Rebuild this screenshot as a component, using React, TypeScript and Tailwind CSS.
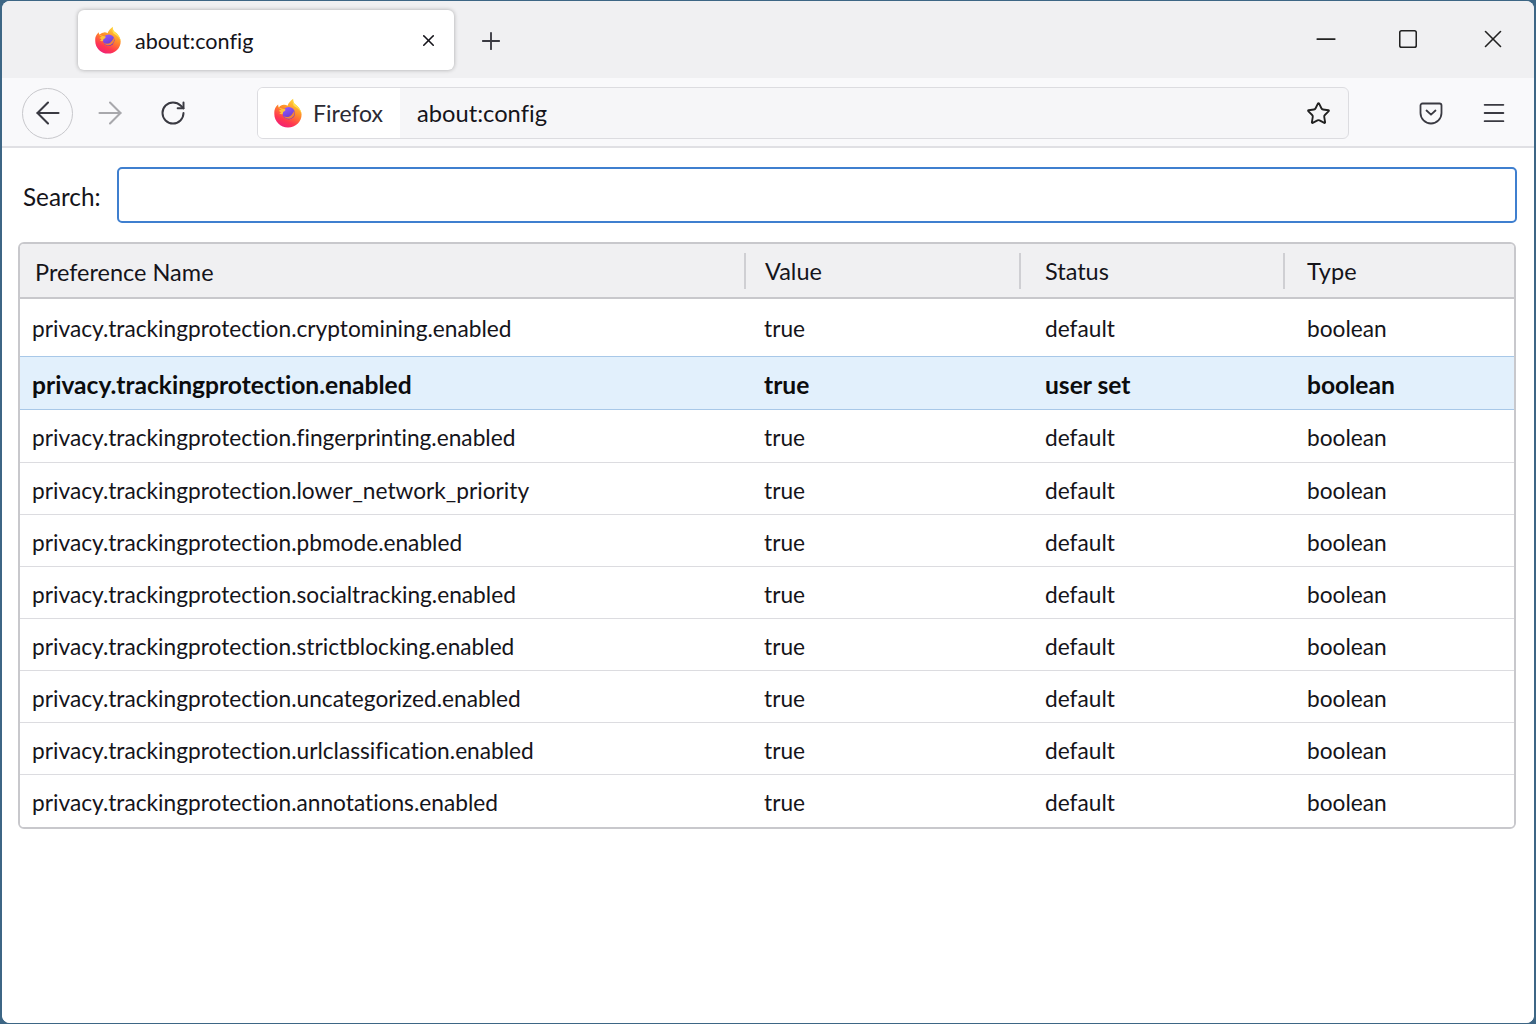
import { ArrowLeft, ArrowRight, RotateCw, Star, Plus, X, Minus, Square, Menu } from "lucide-react";

const rows = [
  { name: "privacy.trackingprotection.cryptomining.enabled", cls: "h-[57px] pt-[4px]" },
  { name: "privacy.trackingprotection.enabled", status: "user set", active: true, cls: "h-[54px] pt-[4px]" },
  { name: "privacy.trackingprotection.fingerprinting.enabled", cls: "h-[53px] pt-[5px]" },
  { name: "privacy.trackingprotection.lower_network_priority", cls: "h-[52px] pt-[6px]" },
  { name: "privacy.trackingprotection.pbmode.enabled", cls: "h-[52px] pt-[6px]" },
  { name: "privacy.trackingprotection.socialtracking.enabled", cls: "h-[52px] pt-[6px]" },
  { name: "privacy.trackingprotection.strictblocking.enabled", cls: "h-[52px] pt-[6px]" },
  { name: "privacy.trackingprotection.uncategorized.enabled", cls: "h-[52px] pt-[6px]" },
  { name: "privacy.trackingprotection.urlclassification.enabled", cls: "h-[52px] pt-[6px]" },
  { name: "privacy.trackingprotection.annotations.enabled", cls: "h-[52px] pt-[5px]" },
];

function FirefoxLogo({ className }: { className?: string }) {
  return (
    <svg viewBox="0 0 32 32" className={className}>
      <defs>
        <linearGradient id="ffOuter" x1="0.75" y1="0.05" x2="0.3" y2="1">
          <stop offset="0" stopColor="#ffd43a" />
          <stop offset="0.4" stopColor="#ff8a2a" />
          <stop offset="0.75" stopColor="#ff3750" />
          <stop offset="1" stopColor="#f0207a" />
        </linearGradient>
        <linearGradient id="ffInner" x1="0.3" y1="0" x2="0.7" y2="1">
          <stop offset="0" stopColor="#9059ff" />
          <stop offset="1" stopColor="#6a35c4" />
        </linearGradient>
      </defs>
      <path
        d="M1.500 13.500C2.200 10.500 4 8 5.500 7c-.1 1.300.2 2.400.8 3.100C7.500 8.300 9.500 7.400 11.500 7.300c1.600-.1 3 .3 4 1C16.300 5.500 18.800 2.800 21.500 0.800c-.2 2 .3 3.800 1.700 5.500 3 2 6.800 5.800 7.300 11 .200 7.800-6.500 14.200-14.500 14.200C8 31.500 1.400 25 1.400 17c0-1.300 0-2.400.1-3.500Z"
        fill="url(#ffOuter)"
      />
      <path d="M21.500 1c-.2 2 .3 3.800 1.700 5.500 3 2 6.800 5.800 7.300 10.800-1.300-4-3.900-6.400-7-7.900C21.200 8.200 20.500 4.800 21.500 1Z" fill="#ffe14a" />
      <circle cx="16.800" cy="16.200" r="6.600" fill="url(#ffInner)" />
      <path d="M22.600 13.500c1.400 4-1 8-5.200 8.600-2.600.3-4.800-.8-6-2.800 2 1.300 5.500 1.300 7.400-.4 1.500-1.300 2.700-3.200 3.800-5.400Z" fill="#ff8a2a" opacity="0.9" />
      <path d="M5.800 9.500c1.700 1 3.800 2 6.200 2.300.900.100 1.500.500 1.200 1.300-.4.900-1.600 1.200-2.200 1.800-.600.700-.300 1.900-.900 2.300-1 .400-2.500-.100-3.600-.900 1 .100 1.800-.200 2-.800-.500-.900-1.500-1.500-2.500-1.700 1-.900 2.200-1.400 3-1.500-1.200-.4-2.400-1.200-3.200-2.300Z" fill="#ffc23a" />
    </svg>
  );
}

function PocketIcon({ className }: { className?: string }) {
  return (
    <svg viewBox="0 0 24 24" fill="none" stroke="currentColor" strokeWidth="1.8" strokeLinecap="round" strokeLinejoin="round" className={className}>
      <path d="M3.500 2.500h17a2 2 0 0 1 2 2v7.500a10.500 10.500 0 0 1-21 0V4.500a2 2 0 0 1 2-2Z" />
      <path d="M7.500 9.500 12 13.700l4.500-4.200" />
    </svg>
  );
}

export default function App() {
  return (
    <div className="h-[1024px] w-[1536px] overflow-hidden bg-[#3d6685] font-['Lato','Noto_Sans',sans-serif] text-[#15141a] [font-variant-ligatures:none]">
      <div className="flex h-[1022px] flex-col overflow-hidden rounded-[8px] ml-[2px] mr-[2px] mt-[1px] bg-white">
        {/* tab strip */}
        <div className="flex h-[77px] items-start bg-[#f0f0f2]">
          <div className="ml-[76px] mt-[9px] flex h-[60px] w-[376px] items-center rounded-[6px] bg-white pl-[16px] pr-[16px] shadow-[0_0_4px_rgba(0,0,0,0.3)]">
            <FirefoxLogo className="h-[28px] w-[28px] shrink-0" />
            <span className="ml-[13px] mt-[2px] flex-1 text-[21.6px]">about:config</span>
            <X className="h-[19px] w-[19px]" strokeWidth={2} />
          </div>
          <Plus className="ml-[23px] mt-[26px] h-[28px] w-[28px] text-[#3a3a42]" strokeWidth={1.6} />
          <div className="ml-auto mt-[23px] flex items-center">
            <Minus className="h-[30px] w-[30px] text-[#222]" strokeWidth={1.4} />
            <Square className="ml-[56px] h-[22px] w-[22px] text-[#222]" strokeWidth={1.7} absoluteStrokeWidth />
            <X className="ml-[59px] mr-[26px] h-[30px] w-[30px] text-[#222]" strokeWidth={1.3} />
          </div>
        </div>

        {/* toolbar */}
        <div className="flex h-[70px] items-center border-b-2 border-[#e0e0e4] bg-[#f9f9fb] pt-[2px]">
          <div className="ml-[20px] flex h-[51px] w-[51px] items-center justify-center rounded-full border border-[#c8c8cc]">
            <ArrowLeft className="h-[36px] w-[36px] text-[#3a3a42]" strokeWidth={1.4} />
          </div>
          <ArrowRight className="ml-[19px] h-[36px] w-[36px] text-[#a8a8ac]" strokeWidth={1.4} />
          <RotateCw className="ml-[31px] h-[28px] w-[28px] text-[#3a3a42]" strokeWidth={1.7} />
          <div className="ml-[70px] flex h-[52px] w-[1092px] items-stretch overflow-hidden rounded-[6px] border border-[#dcdce0] bg-[#f6f6f8]">
            <div className="flex w-[142px] items-center bg-white pl-[15px]">
              <FirefoxLogo className="h-[30px] w-[30px] shrink-0" />
              <span className="ml-[10px] text-[23px] text-[#2b2a33]">Firefox</span>
            </div>
            <div className="flex flex-1 items-center pl-[17px] pr-[17px]">
              <span className="mt-[2px] flex-1 text-[23.7px]">about:config</span>
              <Star className="h-[25px] w-[25px] text-[#222]" strokeWidth={1.8} />
            </div>
          </div>
          <PocketIcon className="ml-[70px] h-[24px] w-[24px] text-[#3a3a42]" />
          <Menu className="ml-[37px] h-[28px] w-[28px] text-[#3a3a42]" strokeWidth={1.6} />
        </div>

        {/* content */}
        <div className="flex-1 bg-white pl-[16px] pr-[18px]">
          <div className="mt-[19px] flex items-center">
            <label className="ml-[5px] mt-[4px] w-[94px] text-[24.3px]">Search:</label>
            <input className="mr-[-1px] h-[56px] flex-1 rounded-[5px] border-2 border-[#3f7fcf] bg-white outline-none" />
          </div>

          <div className="mt-[19px] overflow-hidden rounded-[6px] border-2 border-[#c8c8cc]">
            <div className="grid h-[55px] grid-cols-[724px_275px_264px_1fr] items-center border-b-2 border-[#c8c8cc] bg-[#f0f0f2] text-[23.5px]">
              <div className="mt-[4px] pl-[15px]">Preference Name</div>
              <div className="flex h-[36px] items-center border-l-2 border-[#cfcfd3] pl-[19px] pt-[3px]">Value</div>
              <div className="flex h-[36px] items-center border-l-2 border-[#cfcfd3] pl-[24px] pt-[3px]">Status</div>
              <div className="flex h-[36px] items-center border-l-2 border-[#cfcfd3] pl-[22px] pt-[3px]">Type</div>
            </div>
            {rows.map((r, i) => (
              <div
                key={r.name}
                className={`grid grid-cols-[724px_275px_264px_1fr] items-center ${r.cls} ${
                  r.active
                    ? "border-y border-[#a8c8e8] bg-[#e2f0fc] text-[24.6px] font-bold text-[#0c0c0d]"
                    : i === rows.length - 1 || i === 0
                      ? "bg-white text-[22.7px]"
                      : "border-b border-[#dcdce0] bg-white text-[22.7px]"
                }`}
              >
                <div className="whitespace-nowrap pl-[12px]">{r.name}</div>
                <div className="pl-[20px]">true</div>
                <div className="pl-[26px]">{r.status ?? "default"}</div>
                <div className="pl-[24px]">boolean</div>
              </div>
            ))}
          </div>
        </div>
      </div>
    </div>
  );
}
